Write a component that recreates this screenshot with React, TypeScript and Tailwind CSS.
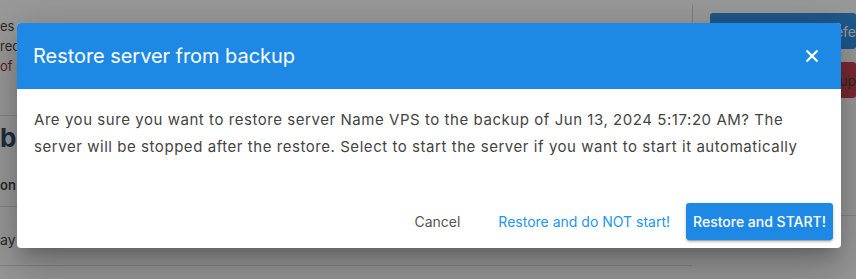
import React from "react";

export default function App() {
  return (
    <div
      className="relative w-[856px] h-[279px] overflow-hidden bg-white text-[#333]"
      style={{ fontFamily: "Inter, 'Noto Sans', sans-serif" }}
    >
      {/* background page */}
      <div className="flex h-full">
        <div className="flex-1 flex flex-col">
          <div className="flex flex-col pt-[16px] text-[13px] leading-[20px]">
            <span>es</span>
            <span>rec</span>
            <span className="text-[#8b1a2b]">of r</span>
          </div>
          <div className="mt-[39px] border-t border-[#ddd]" />
          <div className="mt-[6px] text-[26px] leading-[32px] font-bold text-[#1d3c5a]">bl</div>
          <div className="mt-[21px] text-[13px] leading-[20px] font-semibold">on</div>
          <div className="mt-[11px] border-t border-[#ddd]" />
          <div className="mt-[23px] text-[14px] leading-[20px]">ay 2</div>
          <div className="mt-[15px] border-t border-[#ddd]" />
        </div>
        <div className="w-[164px] flex">
          <div className="w-px h-[25px] mt-[5px] bg-[#ccc]" />
          <div className="flex-1 flex flex-col pl-[17px] pt-[13px] gap-[13px]">
            <div className="h-[36px] bg-[#1e88e5] rounded-[3px] text-white text-[14px] flex items-center justify-end">efe</div>
            <div className="h-[36px] bg-[#c8323f] rounded-[3px] text-[#333] text-[14px] flex items-center justify-end">up</div>
            <div className="mt-[104px] border-t border-[#ddd]" />
          </div>
        </div>
      </div>

      {/* overlay */}
      <div className="absolute inset-0 bg-[#212121]/[0.46]" />

      {/* dialog */}
      <div className="absolute left-[17px] top-[23px] w-[824px] rounded-[4px] bg-white overflow-hidden shadow-[0_11px_15px_-7px_rgba(0,0,0,0.2),0_24px_38px_3px_rgba(0,0,0,0.14),0_9px_46px_8px_rgba(0,0,0,0.12)]">
        <div className="h-[66px] bg-[#1e88e5] flex items-center justify-between pl-[16px] pr-[20px]">
          <span className="text-white text-[20px] tracking-[-0.05px]">Restore server from backup</span>
          <svg width="14" height="14" viewBox="0 0 14 14" className="mr-[2px]">
            <path d="M1.5 1.5 L12.5 12.5 M12.5 1.5 L1.5 12.5" stroke="white" strokeWidth="2.2" />
          </svg>
        </div>
        <div className="px-[17px] pt-[17px] pb-[31px] text-[15px] leading-[27px] text-[#444] tracking-[0.55px]">
          Are you sure you want to restore server Name VPS to the backup of Jun 13, 2024 5:17:20 AM? The server will be stopped after the restore. Select to start the server if you want to start it automatically
        </div>
        <div className="flex justify-end items-center p-[8px] pt-[12px]">
          <button className="h-[37px] px-[15px] text-[14px] text-[#555]">Cancel</button>
          <button className="ml-[8px] h-[37px] px-[15px] text-[14px] text-[#2196f3]">Restore and do NOT start!</button>
          <button className="ml-[1px] h-[37px] px-[7px] rounded-[3px] bg-[#1e88e5] text-white text-[14px] font-medium shadow-[0_3px_1px_-2px_rgba(0,0,0,0.2),0_2px_2px_0_rgba(0,0,0,0.14),0_1px_5px_0_rgba(0,0,0,0.12)]">Restore and START!</button>
        </div>
      </div>
    </div>
  );
}
